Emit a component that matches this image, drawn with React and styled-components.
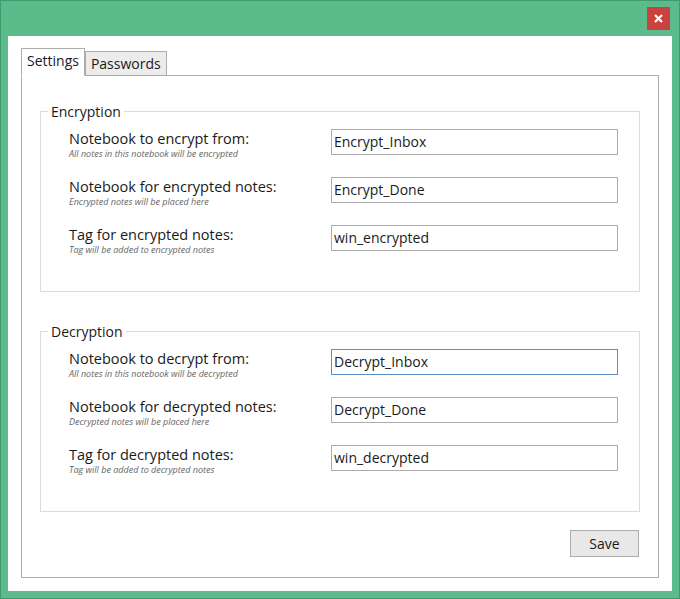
import React from 'react';
import styled, { createGlobalStyle } from 'styled-components';

const Global = createGlobalStyle`
  html, body { margin: 0; padding: 0; }
  body { font-family: "Open Sans", "Noto Sans", sans-serif; color: #1a1a1a; }
`;

const Frame = styled.div`
  width: 680px;
  height: 599px;
  box-sizing: border-box;
  background: #5cbb8b;
  border: 1px solid #3f9a6e;
  display: flex;
  flex-direction: column;
  padding: 0 7px 7px 7px;
`;

const TitleBar = styled.div`
  height: 35px;
  display: flex;
  justify-content: flex-end;
  align-items: flex-start;
  padding-top: 6px;
  box-sizing: border-box;
`;

const Close = styled.div`
  width: 23px;
  height: 23px;
  margin-right: 2px;
  background: #c9423f;
  display: flex;
  align-items: center;
  justify-content: center;
`;

const Client = styled.div`
  flex: 1;
  background: #fff;
  padding: 12px 13px 13px 13px;
  display: flex;
  flex-direction: column;
`;

const Tabs = styled.div`
  display: flex;
  align-items: flex-end;
  height: 28px;
  position: relative;
  z-index: 1;
`;

const Tab = styled.div`
  font-size: 14px;
  padding: 0 5px;
  height: ${p => (p.$active ? '28px' : '25px')};
  line-height: ${p => (p.$active ? '24px' : '24px')};
  background: ${p => (p.$active ? '#fff' : '#ececec')};
  border: 1px solid #acacac;
  border-bottom: ${p => (p.$active ? '1px solid #fff' : '1px solid #acacac')};
  box-sizing: border-box;
`;

const Panel = styled.div`
  flex: 1;
  margin-top: -1px;
  border: 1px solid #acacac;
  padding: 26px 18px 0 18px;
  display: flex;
  flex-direction: column;
`;

const Group = styled.fieldset`
  margin: 0 0 30px 0;
  border: 1px solid #dcdcdc;
  padding: 8px 21px 18px 28px;
  height: 190px;
  box-sizing: border-box;
  display: flex;
  flex-direction: column;
  gap: 12px;
`;

const Legend = styled.legend`
  font-size: 14px;
  padding: 0 3px;
  margin-left: -21px;
`;

const Row = styled.div`
  display: flex;
  justify-content: space-between;
  align-items: flex-start;
  height: 36px;
`;

const Labels = styled.div`
  display: flex;
  flex-direction: column;
  padding-top: 1px;
`;

const Label = styled.div`
  font-size: 14.5px;
  line-height: 18px;
`;

const Hint = styled.div`
  font-size: 9px;
  font-style: italic;
  color: #666;
  line-height: 12px;
`;

const Input = styled.div`
  width: 287px;
  height: 26px;
  box-sizing: border-box;
  border: 1px solid ${p => (p.$focus ? '#5a8fc4' : '#acacac')};
  font-size: 14px;
  line-height: 24px;
  padding-left: 2px;
`;

const Footer = styled.div`
  display: flex;
  justify-content: flex-end;
  margin-top: -12px;
  padding-right: 1px;
`;

const Button = styled.div`
  width: 69px;
  height: 27px;
  box-sizing: border-box;
  border: 1px solid #acacac;
  background: #e8e8e8;
  font-size: 14px;
  line-height: 25px;
  text-align: center;
`;

const groups = [
  {
    title: 'Encryption',
    rows: [
      ['Notebook to encrypt from:', 'All notes in this notebook will be encrypted', 'Encrypt_Inbox'],
      ['Notebook for encrypted notes:', 'Encrypted notes will be placed here', 'Encrypt_Done'],
      ['Tag for encrypted notes:', 'Tag will be added to encrypted notes', 'win_encrypted'],
    ],
  },
  {
    title: 'Decryption',
    rows: [
      ['Notebook to decrypt from:', 'All notes in this notebook will be decrypted', 'Decrypt_Inbox', true],
      ['Notebook for decrypted notes:', 'Decrypted notes will be placed here', 'Decrypt_Done'],
      ['Tag for decrypted notes:', 'Tag will be added to decrypted notes', 'win_decrypted'],
    ],
  },
];

export default function App() {
  return (
    <>
      <Global />
      <Frame>
        <TitleBar>
          <Close>
            <svg width="9" height="9" viewBox="0 0 9 9">
              <path d="M1 1L8 8M8 1L1 8" stroke="#fff" strokeWidth="2.2" />
            </svg>
          </Close>
        </TitleBar>
        <Client>
          <Tabs>
            <Tab $active>Settings</Tab>
            <Tab>Passwords</Tab>
          </Tabs>
          <Panel>
            {groups.map(g => (
              <Group key={g.title}>
                <Legend>{g.title}</Legend>
                {g.rows.map(([label, hint, value, focus]) => (
                  <Row key={label}>
                    <Labels>
                      <Label>{label}</Label>
                      <Hint>{hint}</Hint>
                    </Labels>
                    <Input $focus={focus}>{value}</Input>
                  </Row>
                ))}
              </Group>
            ))}
            <Footer>
              <Button>Save</Button>
            </Footer>
          </Panel>
        </Client>
      </Frame>
    </>
  );
}
